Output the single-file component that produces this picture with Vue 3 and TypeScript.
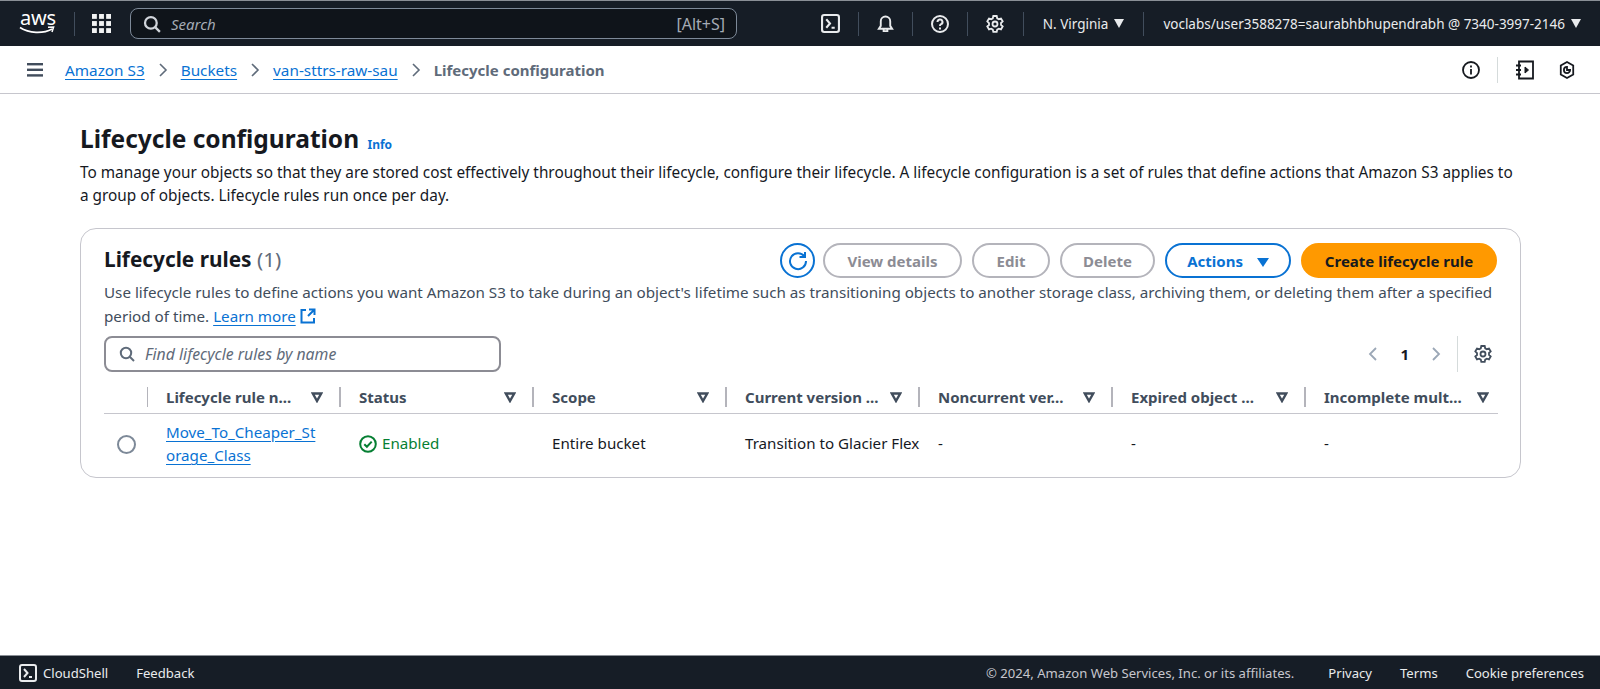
<script setup lang="ts">
const crumbs: string[] = ['Amazon S3', 'Buckets', 'van-sttrs-raw-sau']
const columns: string[] = ['Status', 'Scope', 'Current version ...', 'Noncurrent ver...', 'Expired object ...', 'Incomplete mult...']
</script>

<template>
  <div class="page">
    <header class="topbar">
      <div class="logo">
        <span class="logo-text">aws</span>
        <svg class="smile" width="36" height="9" viewBox="0 0 36 9"><path d="M1 1.5C10 7.5 24 8 33 3" fill="none" stroke="#fff" stroke-width="1.7"/><path d="M29 1.2l5.6-.2-1.6 5" fill="none" stroke="#fff" stroke-width="1.5"/></svg>
      </div>
      <span class="top-sep first"></span>
      <svg class="grid-icon" width="19" height="19" viewBox="0 0 18 18" fill="#f2f3f3"><rect x="0" y="0" width="4.6" height="4.6"/><rect x="6.7" y="0" width="4.6" height="4.6"/><rect x="13.4" y="0" width="4.6" height="4.6"/><rect x="0" y="6.7" width="4.6" height="4.6"/><rect x="6.7" y="6.7" width="4.6" height="4.6"/><rect x="13.4" y="6.7" width="4.6" height="4.6"/><rect x="0" y="13.4" width="4.6" height="4.6"/><rect x="6.7" y="13.4" width="4.6" height="4.6"/><rect x="13.4" y="13.4" width="4.6" height="4.6"/></svg>
      <div class="top-search">
        <svg width="18" height="18" viewBox="0 0 16 16" fill="none" stroke="#d1d5db" stroke-width="2"><circle cx="7" cy="7" r="5.2"/><path d="M11 11l4 4"/></svg>
        <span class="top-search-text">Search</span>
        <span class="shortcut">[Alt+S]</span>
      </div>
      <div class="top-right">
        <div class="top-icons">
          <svg width="19" height="19" viewBox="0 0 18 18" fill="none" stroke="#e9ebed" stroke-width="2"><rect x="1" y="1" width="16" height="16" rx="2"/><path d="M5 5l3.5 4L5 13M10 13h3"/></svg>
          <span class="top-sep"></span>
          <svg width="17" height="20" viewBox="0 0 18 20" fill="none" stroke="#e9ebed" stroke-width="2"><path d="M2 15h14l-2-3V7a5 5 0 0 0-10 0v5z"/><path d="M7 15v2.5h4V15"/></svg>
          <span class="top-sep"></span>
          <svg width="18" height="18" viewBox="0 0 18 18" fill="none" stroke="#e9ebed" stroke-width="2"><circle cx="9" cy="9" r="8"/><path d="M6.5 7a2.5 2.5 0 1 1 3.6 2.2c-.8.4-1.1 1-1.1 1.8"/><path d="M9 12.5v2"/></svg>
          <span class="top-sep"></span>
          <svg width="18" height="18" viewBox="0 0 18 18" fill="none" stroke="#e9ebed" stroke-width="1.8"><path d="M7.3 1h3.4l.5 2.3 1.6.9 2.2-.7 1.7 2.9-1.7 1.6v1.9l1.7 1.6-1.7 2.9-2.2-.7-1.6.9-.5 2.3H7.3l-.5-2.3-1.6-.9-2.2.7-1.7-2.9L3 10V8.1L1.3 6.4 3 3.5l2.2.7 1.6-.9z"/><circle cx="9" cy="9" r="2.5"/></svg>
        </div>
        <span class="top-sep"></span>
        <span class="region">N. Virginia</span><span class="caret"></span>
        <span class="top-sep"></span>
        <span class="account">voclabs/user3588278=saurabhbhupendrabh @ 7340-3997-2146</span><span class="caret"></span>
      </div>
    </header>

    <nav class="crumbbar">
      <svg class="burger" width="16" height="14" viewBox="0 0 16 14" fill="#414d5c"><rect width="16" height="2.4"/><rect y="5.6" width="16" height="2.4"/><rect y="11.2" width="16" height="2.4"/></svg>
      <template v-for="c in crumbs" :key="c">
        <a class="crumb">{{ c }}</a>
        <svg width="10" height="16" viewBox="0 0 10 16" fill="none" stroke="#5f6b7a" stroke-width="1.6" class="chev"><path d="M2 2l6 6-6 6"/></svg>
      </template>
      <span class="crumb-current">Lifecycle configuration</span>
      <div class="crumb-right">
        <svg width="18" height="18" viewBox="0 0 18 18" fill="none" stroke="#16191f" stroke-width="1.8"><circle cx="9" cy="9" r="8"/><path d="M9 8v5.5M9 4.4v2"/></svg>
        <span class="crumb-sep"></span>
        <svg width="19" height="20" viewBox="0 0 19 20" fill="none" stroke="#16191f" stroke-width="1.8"><path d="M4 1.5h14v17H4zM1 5.5h5M1 10h5M1 14.5h5"/><path d="M10 7l3.5 3-3.5 3z" fill="#16191f" stroke-width="1"/></svg>
        <svg class="hex" width="16" height="20" viewBox="0 0 18 20" fill="none" stroke="#16191f" stroke-width="2"><path d="M9 1l7 4v10l-7 4-7-4V5z"/><path d="M9 6.5a3.5 3.5 0 1 0 3.5 3.5H9z"/></svg>
      </div>
    </nav>

    <main class="main">
      <h1 class="title">Lifecycle configuration <a class="info">Info</a></h1>
      <p class="lead">To manage your objects so that they are stored cost effectively throughout their lifecycle, configure their lifecycle. A lifecycle configuration is a set of rules that define actions that Amazon S3 applies to a group of objects. Lifecycle rules run once per day.</p>

      <section class="card">
        <div class="card-head">
          <h2 class="card-title">Lifecycle rules <span class="count">(1)</span></h2>
          <div class="actions">
            <button class="btn refresh"><svg width="20" height="20" viewBox="0 0 20 20" fill="none" stroke="#0972d3" stroke-width="2"><path d="M16.5 5.5A8 8 0 1 0 18 10"/><path d="M11.5 6h5.5V1"/></svg></button>
            <button class="btn disabled w-view">View details</button>
            <button class="btn disabled w-edit">Edit</button>
            <button class="btn disabled w-del">Delete</button>
            <button class="btn normal">Actions <span class="caret blue"></span></button>
            <button class="btn primary">Create lifecycle rule</button>
          </div>
        </div>
        <p class="desc">Use lifecycle rules to define actions you want Amazon S3 to take during an object's lifetime such as transitioning objects to another storage class, archiving them, or deleting them after a specified period of time. <a class="link">Learn more</a> <svg class="ext" width="16" height="16" viewBox="0 0 16 16" fill="none" stroke="#0972d3" stroke-width="2"><path d="M6 2H1.5v12.5H14V10"/><path d="M9 1.5h5.5V7M14 2L8 8"/></svg></p>

        <div class="tools">
          <div class="find">
            <svg width="16" height="16" viewBox="0 0 16 16" fill="none" stroke="#5f6b7a" stroke-width="2"><circle cx="7" cy="7" r="5.2"/><path d="M11 11l4 4"/></svg>
            <span>Find lifecycle rules by name</span>
          </div>
          <div class="pager">
            <svg width="10" height="16" viewBox="0 0 10 16" fill="none" stroke="#9ba7b6" stroke-width="1.8"><path d="M8 2L2 8l6 6"/></svg>
            <b>1</b>
            <svg width="10" height="16" viewBox="0 0 10 16" fill="none" stroke="#9ba7b6" stroke-width="1.8"><path d="M2 2l6 6-6 6"/></svg>
            <span class="pager-sep"></span>
            <svg width="18" height="18" viewBox="0 0 18 18" fill="none" stroke="#414d5c" stroke-width="1.8"><path d="M7.3 1h3.4l.5 2.3 1.6.9 2.2-.7 1.7 2.9-1.7 1.6v1.9l1.7 1.6-1.7 2.9-2.2-.7-1.6.9-.5 2.3H7.3l-.5-2.3-1.6-.9-2.2.7-1.7-2.9L3 10V8.1L1.3 6.4 3 3.5l2.2.7 1.6-.9z"/><circle cx="9" cy="9" r="2.5"/></svg>
          </div>
        </div>

        <div class="table">
          <div class="thead">
            <div class="th-radio"></div>
            <div class="th"><span>Lifecycle rule n...</span><svg class="sort" width="12" height="11" viewBox="0 0 12 11" fill="none" stroke="#414d5c" stroke-width="2.4"><path d="M1.8 1.5h8.4L6 9z"/></svg></div>
            <div v-for="c in columns" :key="c" class="th"><span>{{ c }}</span><svg class="sort" width="12" height="11" viewBox="0 0 12 11" fill="none" stroke="#414d5c" stroke-width="2.4"><path d="M1.8 1.5h8.4L6 9z"/></svg></div>
          </div>
          <div class="trow">
            <div class="td-radio"><span class="radio"></span></div>
            <div class="td wrap"><a class="rule">Move_To_Cheaper_Storage_Class</a></div>
            <div class="td enabled">
              <svg width="18" height="18" viewBox="0 0 18 18" fill="none" stroke="#067f33" stroke-width="2"><circle cx="9" cy="9" r="7.8"/><path d="M5.3 9.2l2.6 2.6 4.8-5.2"/></svg>
              Enabled
            </div>
            <div class="td">Entire bucket</div>
            <div class="td clip">Transition to Glacier Flexible Retrieval</div>
            <div class="td">-</div>
            <div class="td">-</div>
            <div class="td">-</div>
          </div>
        </div>
      </section>
    </main>

    <footer class="footer">
      <svg width="18" height="18" viewBox="0 0 18 18" fill="none" stroke="#e9ebed" stroke-width="2"><rect x="1" y="1" width="16" height="16" rx="2"/><path d="M5 5l3.5 4L5 13M10 13h3"/></svg>
      <span class="cs">CloudShell</span>
      <span class="fb">Feedback</span>
      <div class="foot-right">
        <span class="copy">© 2024, Amazon Web Services, Inc. or its affiliates.</span>
        <span>Privacy</span>
        <span>Terms</span>
        <span>Cookie preferences</span>
      </div>
    </footer>
  </div>
</template>

<style>
html, body { margin: 0; background: #fff; }
</style>

<style scoped>
.page { height: 689px; display: flex; flex-direction: column; font-family: "Noto Sans", "Open Sans", sans-serif; color: #16191f; overflow: hidden; }
.topbar { height: 45px; flex: none; background: #161d26; border-top: 1px solid #8a8f96; display: flex; align-items: center; padding: 0 0 0 19px; color: #e9ebed; font-size: 13px; }
.logo { width: 37px; display: flex; flex-direction: column; align-items: flex-start; line-height: 12px; }
.logo-text { font-size: 20px; color: #fff; line-height: 15px; letter-spacing: -.2px; margin-top: -3px; padding-left: 1px; }
.smile { margin-top: 1px; }
.top-sep { width: 1px; height: 24px; background: #414d5c; flex: none; }
.top-sep.first { margin-left: 18px; }
.grid-icon { margin-left: 17px; }
.top-search { width: 607px; height: 31px; box-sizing: border-box; margin-left: 19px; border: 1px solid #7d8998; border-radius: 8px; background: #0f141a; display: flex; align-items: center; padding: 0 11px 0 12px; gap: 10px; }
.top-search-text { font-style: italic; color: #a4abb5; font-size: 15px; flex: 1; }
.shortcut { color: #a4abb5; font-size: 16px; }
.top-right { margin-left: auto; display: flex; align-items: center; gap: 19px; padding-right: 19px; }
.top-icons { display: flex; align-items: center; gap: 18px; }
.region, .account { font-size: 13.5px; white-space: nowrap; }
.region, .account { margin-right: -13px; }
.caret { display: inline-block; width: 0; height: 0; border-left: 5.5px solid transparent; border-right: 5.5px solid transparent; border-top: 9px solid #e9ebed; }
.caret.blue { border-top-color: #0972d3; border-left-width: 6px; border-right-width: 6px; border-top-width: 9px; margin-left: 10px; }

.crumbbar { height: 48px; flex: none; border-bottom: 1px solid #c6c6cd; display: flex; align-items: center; padding: 0 16px 0 27px; font-size: 15.3px; box-sizing: border-box; gap: 12px; }
.burger { margin-right: 10px; }
.crumb { color: #0972d3; text-decoration: underline; text-underline-offset: 3px; white-space: nowrap; }
.chev { margin: 0 1px; }
.crumb-current { color: #5f6b7a; font-weight: 700; white-space: nowrap; font-size: 15px; }
.crumb-right { margin-left: auto; display: flex; align-items: center; gap: 17px; padding-right: 9px; }
.crumb-sep { width: 1px; height: 26px; background: #d5dbdb; }
.hex { margin-left: 8px; }

.main { flex: 1; padding: 30px 80px 0; min-height: 0; }
.title { margin: 0; font-size: 24.5px; line-height: 30px; font-weight: 700; }
.info { font-size: 12px; color: #0972d3; margin-left: 2px; vertical-align: -1px; }
.lead { margin: 1px 0 0; font-size: 15.35px; line-height: 22.5px; width: 1440px; }
.card { margin-top: 22px; height: 250px; box-sizing: border-box; width: 1441px; border: 1px solid #c6c6cd; border-radius: 16px; padding: 14px 23px; }
.card-head { display: flex; align-items: center; justify-content: space-between; }
.card-title { margin: 0; padding-bottom: 3px; font-size: 20.8px; font-weight: 700; line-height: 31px; }
.count { font-weight: 400; color: #5f6b7a; }
.actions { display: flex; align-items: center; gap: 10px; }
.btn { height: 35px; border-radius: 18px; font-family: inherit; font-size: 15px; font-weight: 700; background: #fff; border: 2px solid #b4b4bb; color: #8c8c94; padding: 0; box-sizing: border-box; white-space: nowrap; }
.refresh { width: 35px; border-color: #0972d3; display: flex; align-items: center; justify-content: center; margin-right: -2px; }
.w-view { width: 139px; }
.w-edit { width: 78px; }
.w-del { width: 95px; }
.normal { width: 126px; border-color: #0972d3; color: #0972d3; }
.primary { width: 196px; background: #ff9900; border-color: #ff9900; color: #16191f; }
.desc { margin: 3px 0 0; font-size: 15.2px; line-height: 23.5px; color: #414d5c; }
.link { color: #0972d3; text-decoration: underline; text-underline-offset: 3px; }
.ext { vertical-align: -2px; }
.tools { display: flex; align-items: center; justify-content: space-between; margin-top: 8px; }
.find { width: 397px; height: 36px; box-sizing: border-box; border: 2px solid #8c8c94; border-radius: 8px; display: flex; align-items: center; gap: 10px; padding: 0 13px; font-style: italic; font-size: 15.8px; color: #5f6b7a; white-space: nowrap; }
.pager { display: flex; align-items: center; gap: 22px; height: 36px; padding-right: 5px; }
.pager b { font-size: 15px; color: #16191f; }
.pager-sep { width: 1px; height: 36px; background: #d5dbdb; margin: 0 -6px; }
.table { margin-top: 9px; width: 1394px; }
.thead { display: grid; grid-template-columns: 44px repeat(7, 193px); height: 33px; border-bottom: 1px solid #c6c6cd; box-sizing: border-box; font-size: 15px; font-weight: 700; color: #414d5c; }
.th-radio { border-right: 1px solid #b4b4bb; height: 20px; margin-top: 6px; box-sizing: border-box; }
.th { border-right: 2px solid #b4b4bb; height: 20px; margin-top: 6px; box-sizing: border-box; display: flex; align-items: center; justify-content: space-between; padding: 0 16px 0 18px; white-space: nowrap; overflow: hidden; }
.th:last-child { border-right: 0; padding-right: 10px; }
.sort { flex: none; }
.trow { display: grid; grid-template-columns: 44px repeat(7, 193px); align-items: center; height: 60px; font-size: 15.15px; }
.td-radio { display: flex; justify-content: center; }
.radio { width: 15px; height: 15px; border: 2px solid #7d8998; border-radius: 50%; }
.td { padding: 0 18px; line-height: 23.5px; box-sizing: border-box; white-space: nowrap; overflow: hidden; }
.td.wrap { white-space: normal; }
.rule { color: #0972d3; text-decoration: underline; text-underline-offset: 3px; word-break: break-all; display: block; }
.enabled { color: #067f33; display: flex; align-items: center; gap: 5px; }
.clip { padding-right: 5px; }
.footer { height: 34px; flex: none; background: #161d26; border-top: 1px solid #8a8f96; box-sizing: border-box; display: flex; align-items: center; padding: 0 16px 0 19px; color: #e9ebed; font-size: 13.1px; }
.cs { margin-left: 6px; }
.fb { margin-left: 28px; }
.foot-right { margin-left: auto; display: flex; gap: 28px; }
.copy { color: #c6c6cd; margin-right: 6px; }
</style>
